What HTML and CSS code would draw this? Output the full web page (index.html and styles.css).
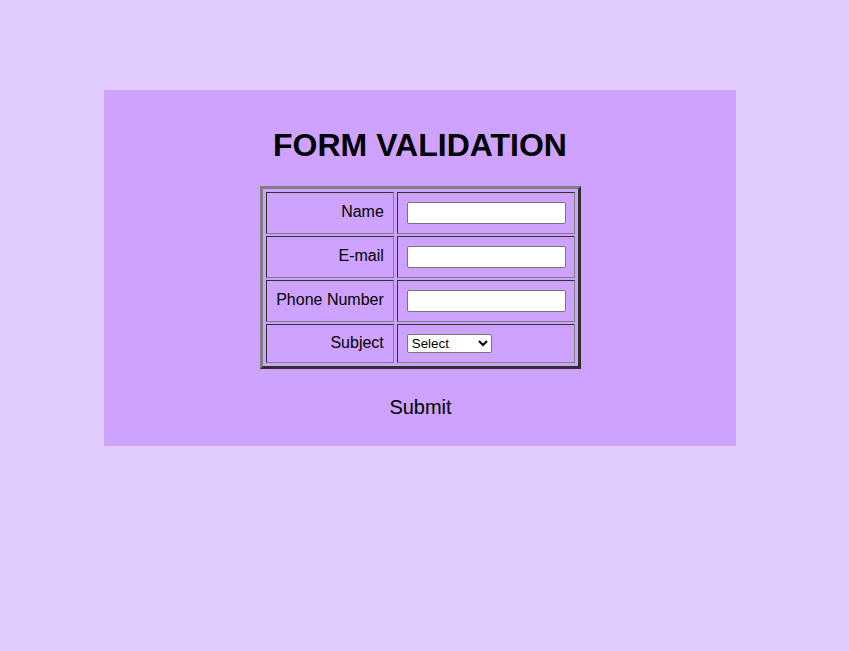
FILE: index.html
```html
<!DOCTYPE html>
<html lang="en">
<head>
<meta charset="utf-8">
<title>Form Validation</title>
<link rel="stylesheet" href="styles.css">
</head>
<body>
<div class="panel">
  <h1 class="title">FORM VALIDATION</h1>
  <form class="form">
    <table class="grid">
      <tr>
        <td class="label">Name</td>
        <td class="field"><input class="text-input" type="text"></td>
      </tr>
      <tr>
        <td class="label">E-mail</td>
        <td class="field"><input class="text-input" type="text"></td>
      </tr>
      <tr>
        <td class="label">Phone Number</td>
        <td class="field"><input class="text-input" type="text"></td>
      </tr>
      <tr>
        <td class="label">Subject</td>
        <td class="field">
          <select class="select-input">
            <option>Select</option>
            <option>Math</option>
            <option>Science</option>
          </select>
        </td>
      </tr>
    </table>
    <button class="submit" type="button">Submit</button>
  </form>
</div>
</body>
</html>
```

FILE: styles.css
```css
html, body {
  margin: 0;
  padding: 0;
}

body {
  background: #e2ccff;
  font-family: "Liberation Sans", Arial, sans-serif;
  color: #000;
  padding-top: 90px;
  padding-left: 104px;
}

.panel {
  width: 632px;
  height: 356px;
  box-sizing: border-box;
  background: #cea3ff;
  display: flex;
  flex-direction: column;
  align-items: center;
  padding-top: 37px;
}

.title {
  margin: 0;
  font-size: 32px;
  line-height: 37px;
  font-weight: bold;
}

.form {
  display: flex;
  flex-direction: column;
  align-items: center;
  margin-top: 22px;
  margin-left: 1px;
}

.grid {
  border-style: solid;
  border-width: 3px;
  border-color: #808080 #2f2f2f #2f2f2f #808080;
  border-spacing: 3px 2px;
  padding: 1px 0;
  border-collapse: separate;
}

.grid td {
  border-style: solid;
  border-width: 1px;
  border-color: #2f2f2f #808080 #808080 #2f2f2f;
  padding: 9px;
  font-size: 16px;
  vertical-align: middle;
}

.grid .label {
  text-align: right;
  padding-top: 8px;
  padding-bottom: 10px;
}

.grid .field {
  text-align: left;
  line-height: 0;
  padding-right: 8px;
}

.text-input {
  box-sizing: border-box;
  width: 159px;
  height: 22px;
  margin: 0;
  border: 1px solid #767676;
  border-radius: 2px;
  background: #fff;
  font-family: "Liberation Sans", Arial, sans-serif;
  font-size: 13.33px;
  padding: 1px 2px;
}

.select-input {
  box-sizing: border-box;
  width: 85px;
  height: 19px;
  margin: 0;
  border: 1px solid #767676;
  border-radius: 2px;
  background: #fff;
  font-family: "Liberation Sans", Arial, sans-serif;
  font-size: 13.33px;
  color: #000;
}

.submit {
  margin-top: 27px;
  padding: 0;
  border: none;
  background: transparent;
  font-family: "Liberation Sans", Arial, sans-serif;
  font-size: 20px;
  line-height: 23px;
  color: #000;
  cursor: pointer;
}
```
